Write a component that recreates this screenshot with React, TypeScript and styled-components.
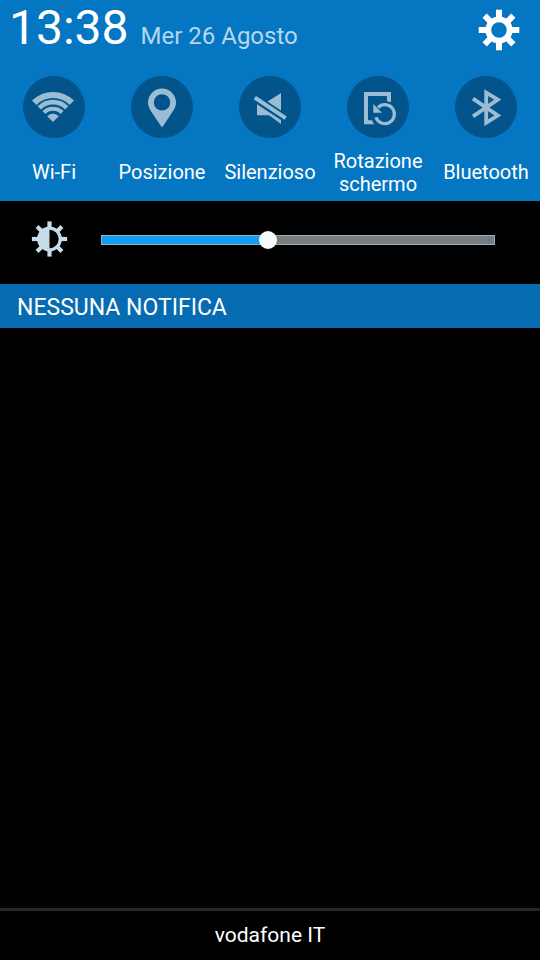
import React, { useState } from 'react';
import styled, { createGlobalStyle } from 'styled-components';

const GlobalStyle = createGlobalStyle`
  *, *::before, *::after { box-sizing: border-box; }
  body {
    margin: 0;
    background: #000;
    color: #fff;
    font-family: Roboto, "Liberation Sans", sans-serif;
  }
  button { font: inherit; color: inherit; background: none; border: 0; padding: 0; cursor: pointer; }
`;

const Shade = styled.main`
  display: flex;
  flex-direction: column;
  min-height: 100vh;
`;

const TopPanel = styled.section`
  background: #0576c2;
  padding-bottom: 5px;
`;

const Header = styled.header`
  display: flex;
  align-items: center;
  justify-content: space-between;
  height: 60px;
  padding: 0 20px 0 9px;
`;

const Clock = styled.div`
  display: flex;
  align-items: baseline;
  gap: 12px;
  padding-bottom: 4px;
  white-space: nowrap;
`;

const Time = styled.time`
  font-size: 48px;
  line-height: 56px;
`;

const DateText = styled.span`
  font-size: 24px;
  color: #b5d6ed;
`;

const IconButton = styled.button`
  display: flex;
`;

const Toggles = styled.nav`
  display: grid;
  grid-template-columns: repeat(5, 1fr);
  padding-top: 16px;
`;

const Toggle = styled.button`
  display: flex;
  flex-direction: column;
  align-items: center;
  gap: 11px;
`;

const Disc = styled.span`
  display: flex;
  width: 62px;
  height: 62px;
  border-radius: 50%;
  background: #02548b;
  color: #9bbcd3;
`;

const Label = styled.span`
  display: flex;
  align-items: center;
  justify-content: center;
  height: 47px;
  font-size: 20px;
  line-height: 23px;
  text-align: center;
`;

const BrightnessRow = styled.label`
  display: flex;
  align-items: center;
  gap: 33px;
  height: 83px;
  padding: 0 45px 5px 31px;
  color: #c5dcea;
`;

const Slider = styled.input<{ $fill: number }>`
  appearance: none;
  flex: 1;
  min-width: 0;
  height: 20px;
  margin: 0;
  background: transparent;

  &::-webkit-slider-runnable-track {
    height: 10px;
    border: 1px solid #8fb2cb;
    background: linear-gradient(to right, #129ff0 ${(p) => p.$fill}%, #7b7b7b ${(p) => p.$fill}%);
  }
  &::-webkit-slider-thumb {
    appearance: none;
    width: 18px;
    height: 18px;
    margin-top: -5px;
    border-radius: 50%;
    background: #f6fafd;
  }
`;

const NoticeBar = styled.h2`
  margin: 0;
  padding: 3px 17px 0;
  background: #066bb0;
  font-size: 23px;
  font-weight: 400;
  line-height: 41px;
`;

const Notices = styled.section`
  flex: 1;
`;

const Carrier = styled.footer`
  height: 52px;
  border-top: 3px solid #1f292e;
  font-size: 21px;
  line-height: 48px;
  text-align: center;
`;

const teeth = [0, 45, 90, 135, 180, 225, 270, 315];

const GearIcon = () => (
  <svg width="42" height="42" viewBox="-21 -21 42 42" aria-hidden="true">
    <circle r="10.7" fill="none" stroke="currentColor" strokeWidth="5.8" />
    {teeth.map((a) => (
      <rect key={a} x="-3" y="-20.3" width="6" height="9" fill="currentColor" transform={`rotate(${a})`} />
    ))}
  </svg>
);

const BrightnessIcon = () => (
  <svg width="37" height="38" viewBox="-18.5 -18 37 38" aria-hidden="true">
    <circle r="10.8" fill="none" stroke="currentColor" strokeWidth="3.2" />
    <path d="M0-10A10 10 0 0 0 0 10Z" fill="currentColor" />
    {teeth.map((a) => (
      <rect key={a} x="-2.1" y="-17.6" width="4.2" height="7" fill="currentColor" transform={`rotate(${a})`} />
    ))}
  </svg>
);

const Glyph = ({ children }: { children: React.ReactNode }) => (
  <svg width="62" height="62" viewBox="0 0 62 62" fill="none" stroke="currentColor" aria-hidden="true">
    {children}
  </svg>
);

const WifiIcon = () => (
  <Glyph>
    <path d="M11.2 26.8A26.5 26.5 0 0 1 48.8 26.8" strokeWidth="6.2" />
    <path d="M16.3 31.9A19.3 19.3 0 0 1 43.7 31.9" strokeWidth="4.8" />
    <path d="M20.9 36.5A12.9 12.9 0 0 1 39.1 36.5" strokeWidth="4.2" />
    <path d="M30 46L24.2 40.2A8.2 8.2 0 0 1 35.8 40.2Z" fill="currentColor" stroke="none" />
  </Glyph>
);

const PinIcon = () => (
  <Glyph>
    <path
      d="M31 12.6A14 14 0 0 0 17 26.6C17 31.5 19.5 34.5 22 38.2L31 51.4L40 38.2C42.5 34.5 45 31.5 45 26.6A14 14 0 0 0 31 12.6ZM31 18.2A8.2 8.2 0 1 1 31 34.6A8.2 8.2 0 1 1 31 18.2Z"
      fill="currentColor"
      fillRule="evenodd"
      stroke="none"
    />
  </Glyph>
);

const MuteIcon = () => (
  <Glyph>
    <path d="M42 17V34.5L28.5 25.5Z" fill="currentColor" stroke="none" />
    <path d="M18 28.3V39.3H30L42 48V44Z" fill="currentColor" stroke="none" />
    <path d="M17.5 22.7L45 41" strokeWidth="4" strokeLinecap="square" />
  </Glyph>
);

const RotateIcon = () => (
  <Glyph>
    <path d="M17 16H44V26.3L40 25.3V20H21V44.3H25L27 48.3H17Z" fill="currentColor" stroke="none" />
    <path d="M31 31.6A9.5 9.5 0 1 1 28.9 41.2" strokeWidth="3.2" />
    <path d="M26.3 28V36.7H35Z" fill="currentColor" stroke="none" />
  </Glyph>
);

const BluetoothIcon = () => (
  <Glyph>
    <path d="M18 22.6L42.8 39.4L31.2 46.8V16.6L42.8 23.6L18 40.4" strokeWidth="3.8" strokeMiterlimit="6" />
  </Glyph>
);

const toggles = [
  { label: 'Wi-Fi', Icon: WifiIcon },
  { label: 'Posizione', Icon: PinIcon },
  { label: 'Silenzioso', Icon: MuteIcon },
  { label: 'Rotazione schermo', Icon: RotateIcon },
  { label: 'Bluetooth', Icon: BluetoothIcon },
];

const MAX_BRIGHTNESS = 255;

export default function App() {
  const [brightness, setBrightness] = useState(107);

  return (
    <>
      <GlobalStyle />
      <Shade>
        <TopPanel>
          <Header>
            <Clock>
              <Time>13:38</Time>
              <DateText>Mer 26 Agosto</DateText>
            </Clock>
            <IconButton type="button" aria-label="Impostazioni">
              <GearIcon />
            </IconButton>
          </Header>
          <Toggles>
            {toggles.map(({ label, Icon }) => (
              <Toggle key={label} type="button">
                <Disc>
                  <Icon />
                </Disc>
                <Label>{label}</Label>
              </Toggle>
            ))}
          </Toggles>
        </TopPanel>
        <BrightnessRow>
          <BrightnessIcon />
          <Slider
            type="range"
            aria-label="Luminosità"
            min={0}
            max={MAX_BRIGHTNESS}
            value={brightness}
            $fill={(brightness / MAX_BRIGHTNESS) * 100}
            onChange={(e) => setBrightness(Number(e.target.value))}
          />
        </BrightnessRow>
        <Notices>
          <NoticeBar>NESSUNA NOTIFICA</NoticeBar>
        </Notices>
        <Carrier>vodafone IT</Carrier>
      </Shade>
    </>
  );
}
